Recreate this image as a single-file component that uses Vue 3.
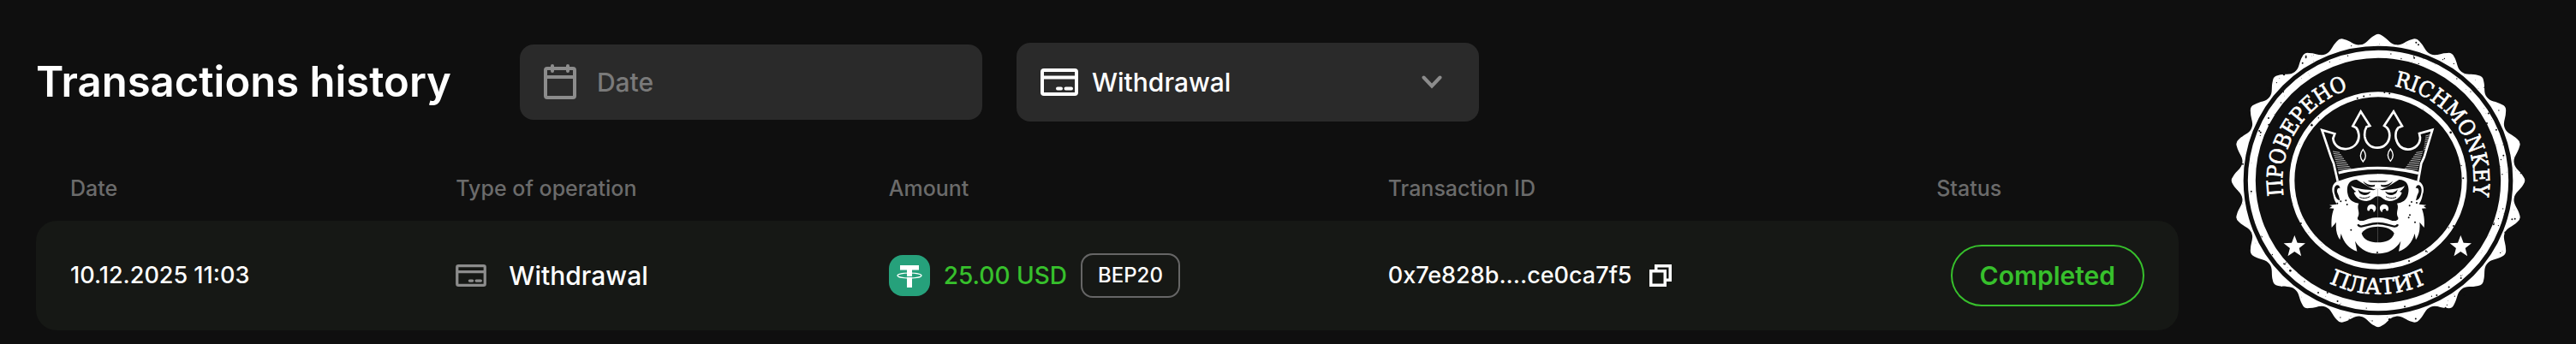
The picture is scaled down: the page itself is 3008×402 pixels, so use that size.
<template>
  <div class="page">
    <main class="history">
      <div class="toolbar">
        <h1 class="title">Transactions history</h1>
        <div class="filters">
          <label class="field field-date">
            <svg class="icon-calendar" viewBox="0 0 38 42" fill="none" stroke="currentColor" stroke-width="4">
              <rect x="2" y="5" width="34" height="34" rx="2" />
              <path d="M2 15H36" />
              <path d="M10 2V8M28 2V8" stroke-linecap="round" />
            </svg>
            <input v-model="date" type="text" placeholder="Date" aria-label="Date" />
          </label>
          <label class="field field-type">
            <svg class="icon-card" viewBox="0 0 44 32" fill="none" stroke="currentColor" stroke-width="4">
              <rect x="2" y="2" width="40" height="28" rx="2" />
              <path d="M2 10.5H42" />
              <path d="M20 23.5H24M29.500 23.500H36" stroke-linecap="round" />
            </svg>
            <select v-model="type" aria-label="Type of operation">
              <option>Withdrawal</option>
              <option>Deposit</option>
            </select>
            <svg class="icon-chevron" viewBox="0 0 24 16" fill="none" stroke="currentColor" stroke-width="4">
              <path d="M2.500 2.500L12 12.500L21.500 2.500" stroke-linecap="round" />
            </svg>
          </label>
        </div>
      </div>

      <table class="table">
        <colgroup>
          <col class="col-date" />
          <col class="col-type" />
          <col class="col-amount" />
          <col class="col-id" />
          <col />
        </colgroup>
        <thead>
          <tr>
            <th v-for="name in columns" :key="name" scope="col">{{ name }}</th>
          </tr>
        </thead>
        <tbody>
          <tr v-for="row in rows" :key="row.id">
            <td class="code">{{ row.date }}</td>
            <td>
              <div class="cell cell-type">
                <svg class="icon-card small" viewBox="0 0 44 32" fill="none" stroke="currentColor" stroke-width="4">
                  <rect x="2" y="2" width="40" height="28" rx="2" />
                  <path d="M2 10.5H42" />
                  <path d="M20 23.5H24M29.500 23.500H36" stroke-linecap="round" />
                </svg>
                <span>{{ row.type }}</span>
              </div>
            </td>
            <td>
              <div class="cell cell-amount">
                <svg class="coin" viewBox="0 0 48 48">
                  <rect width="48" height="48" rx="16" fill="#26a17b" />
                  <path d="M13 12H35V17.500H27V38H21V17.500H13Z" fill="#fff" />
                  <ellipse cx="24" cy="24" rx="14" ry="3" fill="none" stroke="#fff" stroke-width="1.200" />
                  <path d="M21 25.500H27" stroke="#26a17b" stroke-width="1" />
                </svg>
                <span class="amount">{{ row.amount }}</span>
                <span class="network">{{ row.network }}</span>
              </div>
            </td>
            <td>
              <div class="cell cell-id">
                <span class="code">{{ row.id }}</span>
                <button class="copy" type="button" aria-label="Copy transaction ID">
                  <svg viewBox="0 0 26 26" fill="none" stroke="currentColor" stroke-width="3.500">
                    <rect x="1.750" y="7.750" width="16.500" height="16.500" />
                    <path d="M7.750 7V1.750H24.250V18.250H19" />
                  </svg>
                </button>
              </div>
            </td>
            <td class="cell-status"><span class="status">{{ row.status }}</span></td>
          </tr>
        </tbody>
      </table>
    </main>

    <svg class="seal" viewBox="45 56 1032 1032" role="img" aria-label="Richmonkey">
      <defs>
        <path id="arc-top" d="M226 572A335 335 0 0 1 896 572A335 335 0 0 1 561 907A335 335 0 0 1 226 572" />
        <path id="arc-left" d="M561 907A335 335 0 0 1 561 237A335 335 0 0 1 896 572" />
        <path id="arc-bottom" d="M163 572A398 398 0 0 0 959 572" />
      </defs>

      <!-- rim and rings -->
      <path :d="rim" fill="#fff" />
      <circle cx="561" cy="572" r="464" fill="#0f0f0f" stroke="#0f0f0f" stroke-width="16" />
      <circle cx="561" cy="572" r="443" fill="none" stroke="#fff" stroke-width="27" />
      <circle cx="561" cy="572" r="302" fill="none" stroke="#fff" stroke-width="18" />

      <!-- lettering -->
      <g class="seal-text" text-anchor="middle">
        <text><textPath href="#arc-left" startOffset="709">ПРОВЕРЕНО</textPath></text>
        <text><textPath href="#arc-top" startOffset="844">RICHMONKEY</textPath></text>
        <text class="wide"><textPath href="#arc-bottom" startOffset="50%">ПЛАТИТ</textPath></text>
      </g>
      <path v-for="x in [268, 850]" :key="x" :d="star(x, 804)" fill="#fff" />

      <!-- crown -->
      <g fill="none" stroke="#fff">
        <path
          d="M419 574L405 512L396 490L364 395L409 408L403 424C405 448 425 463 450 461C480 458 496 435 493 410C491 397 487 390 483 386L472 381L500 330L532 380L520 384C512 398 513 410 514 418C518 442 535 457 558 457C583 457 600 438 601 414C601 402 597 392 591 386L582 380L615 330L645 381L631 387C622 397 621 410 623 424C629 450 645 462 665 463C690 462 708 444 708 422L705 407L751 394L722 490L712 512L701 574"
          stroke-width="8"
        />
        <path d="M422 545Q560 511 702 546" stroke-width="10" />
        <path d="M508 463Q490 485 508 506Q526 485 508 463ZM604 461Q586 483 604 504Q622 483 604 461Z" stroke-width="4" />
        <path :d="hatching" stroke-width="2" />
      </g>

      <!-- face, drawn as one half and its mirror -->
      <g v-for="flip in halves" :key="flip" :transform="flip">
        <path
          d="M561 549C510 549 470 558 430 571C402 573 395 600 403 620C406 640 412 648 416 655L390 658L400 662L390 669L406 670C398 690 396 715 398 737L414 718C411 745 417 765 427 780L431 758C440 790 460 812 487 820L480 784C500 818 530 828 561 828Z"
          fill="#fff"
        />
        <path d="M424 590C411 581 403 600 409 620C412 632 418 640 427 642L423 626L417 612C416 602 420 596 428 599Z" fill="#0f0f0f" />
        <path
          d="M486 569C460 568 448 590 454 618C458 642 476 650 493 652C484 670 500 682 489 702C486 712 502 718 516 711C532 704 545 702 561 702V625L561 601L545 602C524 594 506 580 486 569Z"
          fill="#0f0f0f"
        />
        <path d="M524 573H561V577H534Z" fill="#0f0f0f" />
        <path d="M508 574C522 586 536 590 550 586L548 593C530 598 516 588 508 574Z" fill="#0f0f0f" />
        <path
          d="M466 590C482 602 525 604 545 606L561 598V627C546 626 541 643 520 644C500 644 482 634 476 614L484 611C476 606 470 600 466 590Z"
          fill="#fff"
        />
        <path d="M490 603C502 616 520 617 535 610C528 624 508 628 495 615Z" fill="#0f0f0f" />
        <path d="M496 630C508 636 521 634 532 628" fill="none" stroke="#0f0f0f" stroke-width="3" />
        <path d="M524 678C518 660 535 650 548 658C557 664 553 679 545 683C546 674 538 668 533 672C530 675 533 680 524 678Z" fill="#fff" />
        <path d="M488 714C515 726 530 708 561 709" fill="none" stroke="#fff" stroke-width="7" />
        <path d="M490 726C498 744 526 721 561 722" fill="none" stroke="#0f0f0f" stroke-width="7" />
        <path d="M503 757C514 738 538 734 561 733V789C532 789 510 780 503 757Z" fill="#0f0f0f" />
      </g>

      <!-- worn ink -->
      <circle v-for="(s, i) in specks" :key="i" :cx="s.x" :cy="s.y" :r="s.r" fill="#0f0f0f" />
    </svg>
  </div>
</template>

<script setup>
import { ref } from 'vue'

const date = ref('')
const type = ref('Withdrawal')

const columns = ['Date', 'Type of operation', 'Amount', 'Transaction ID', 'Status']

const rows = [
  {
    date: '10.12.2025 11:03',
    type: 'Withdrawal',
    amount: '25.00 USD',
    network: 'BEP20',
    id: '0x7e828b....ce0ca7f5',
    status: 'Completed'
  }
]

const halves = ['translate(0 0)', 'translate(1120 0) scale(-1 1)']

function polar(r, deg, cx = 561, cy = 572) {
  const a = (deg * Math.PI) / 180
  return `${(cx + r * Math.sin(a)).toFixed(1)} ${(cy - r * Math.cos(a)).toFixed(1)}`
}

// 24 rounded teeth
const rim = (() => {
  let d = `M${polar(480, -7.5)}`
  for (let i = 0; i < 24; i++) {
    const a = i * 15
    d += `C${polar(480, a - 5)} ${polar(498, a - 4)} ${polar(509, a - 1.5)}`
    d += `Q${polar(519, a)} ${polar(509, a + 1.5)}`
    d += `C${polar(498, a + 4)} ${polar(480, a + 5)} ${polar(480, a + 7.5)}`
  }
  return d + 'Z'
})()

function star(x, y) {
  const points = []
  for (let i = 0; i < 10; i++) points.push(polar(i % 2 ? 17 : 40, i * 36, x, y))
  return `M${points.join('L')}Z`
}

// crown shading
const hatching = (() => {
  let d = ''
  for (let i = 0; i < 10; i++) {
    const y = 470 + i * 7
    d += `M${402 + i * 2} ${y}L${426 + i * 5} ${y + 4}`
    d += `M${718 - i * 2} ${y}L${694 - i * 5} ${y + 4}`
  }
  for (let i = 0; i < 8; i++) d += `M${741 - i * 2} ${412 + i * 7}L${727 - i} ${416 + i * 7}`
  return d
})()

// pseudo-random, so that the wear is always the same
const specks = (() => {
  const list = []
  let seed = 7
  const next = () => {
    seed = (seed * 16807) % 2147483647
    return seed / 2147483647
  }
  const bands = [[476, 505, 80], [430, 456, 80], [294, 311, 30]]
  for (const [from, to, count] of bands) {
    for (let i = 0; i < count; i++) {
      const [x, y] = polar(from + next() * (to - from), next() * 360).split(' ')
      list.push({ x, y, r: 1 + Math.round(next() * next() * 3) })
    }
  }
  const face = [[418, 652], [430, 645], [452, 656], [448, 642], [671, 660], [678, 647], [696, 650], [672, 693], [668, 702], [690, 718], [558, 824], [466, 745], [308, 136], [296, 160], [694, 88], [702, 96], [1000, 484], [1040, 706]]
  for (const [x, y] of face) list.push({ x, y, r: 3 })
  return list
})()
</script>

<style>
body {
  background: #0f0f0f;
}
</style>

<style scoped>
.page {
  display: flex;
  align-items: flex-start;
  gap: 61px;
  padding: 39px 59px 16px 42px;
  color: #fff;
  font-family: Inter, sans-serif;
  font-size: 30px;
  font-weight: 500;
  line-height: 36px;
}

.history {
  flex: 1;
  min-width: 0;
  padding-top: 11px;
}

.toolbar {
  display: flex;
  align-items: center;
  gap: 80px;
}

.title {
  margin: 0;
  font-size: 49px;
  font-weight: 600;
  line-height: 60px;
  white-space: nowrap;
}

.filters {
  display: flex;
  align-items: center;
  gap: 40px;
}

.field {
  display: flex;
  align-items: center;
  box-sizing: border-box;
  width: 540px;
  padding: 0 28px;
  border-radius: 16px;
  background: #2a2a2a;
}

.field-date {
  gap: 24px;
  height: 88px;
}

.field-type {
  gap: 16px;
  height: 92px;
  padding-right: 43px;
}

.field input,
.field select {
  flex: 1;
  min-width: 0;
  margin: 0;
  padding: 0;
  border: 0;
  outline: 0;
  background: none;
  color: #fff;
  font: inherit;
  appearance: none;
}

.field input::placeholder {
  color: #7a7a7a;
  opacity: 1;
}

.icon-calendar {
  width: 38px;
  height: 42px;
  color: #8c8c8c;
}

.icon-card {
  width: 44px;
  height: 32px;
}

.icon-card.small {
  width: 36px;
  height: 26px;
  color: #8c8c8c;
}

.icon-chevron {
  width: 24px;
  height: 16px;
  color: #8c8c8c;
  pointer-events: none;
}

.table {
  width: 100%;
  margin-top: 64px;
  border-spacing: 0;
  table-layout: fixed;
}

.col-date {
  width: 18%;
}

.col-type {
  width: 20.2%;
}

.col-amount {
  width: 23.3%;
}

.col-id {
  width: 25.6%;
}

th {
  padding: 0 0 24px 40px;
  color: #6b6b6b;
  font-size: 25px;
  font-weight: 500;
  line-height: 28px;
  text-align: left;
}

td {
  height: 128px;
  padding: 0 0 0 40px;
  background: #161815;
  white-space: nowrap;
}

td:first-child {
  border-radius: 24px 0 0 24px;
}

td:last-child {
  border-radius: 0 24px 24px 0;
}

.code {
  font-size: 27px;
}

.cell {
  display: flex;
  align-items: center;
}

.cell-type {
  gap: 26px;
}

.cell-amount {
  gap: 16px;
}

.cell-id {
  gap: 20px;
}

.coin {
  width: 48px;
  height: 48px;
}

.amount {
  color: #37c02c;
  font-size: 28px;
}

.network {
  padding: 8px 18px;
  border: 2px solid #666;
  border-radius: 14px;
  font-size: 24px;
  line-height: 32px;
}

.copy {
  width: 26px;
  height: 26px;
  padding: 0;
  border: 0;
  background: none;
  color: inherit;
  cursor: pointer;
}

.copy svg {
  display: block;
}

td.cell-status {
  padding-right: 40px;
  text-align: right;
}

.status {
  display: inline-block;
  padding: 16px 32px;
  border: 2px solid #37c02c;
  border-radius: 36px;
  color: #37c02c;
  font-weight: 600;
}

.seal {
  flex: none;
  width: 344px;
  height: 344px;
}

.seal-text {
  fill: #fff;
  stroke: #fff;
  stroke-width: 2px;
  font-family: 'DejaVu Serif Condensed', 'DejaVu Serif', serif;
  font-size: 76px;
  font-weight: 400;
}

.seal-text .wide {
  font-family: 'DejaVu Serif', serif;
}
</style>
